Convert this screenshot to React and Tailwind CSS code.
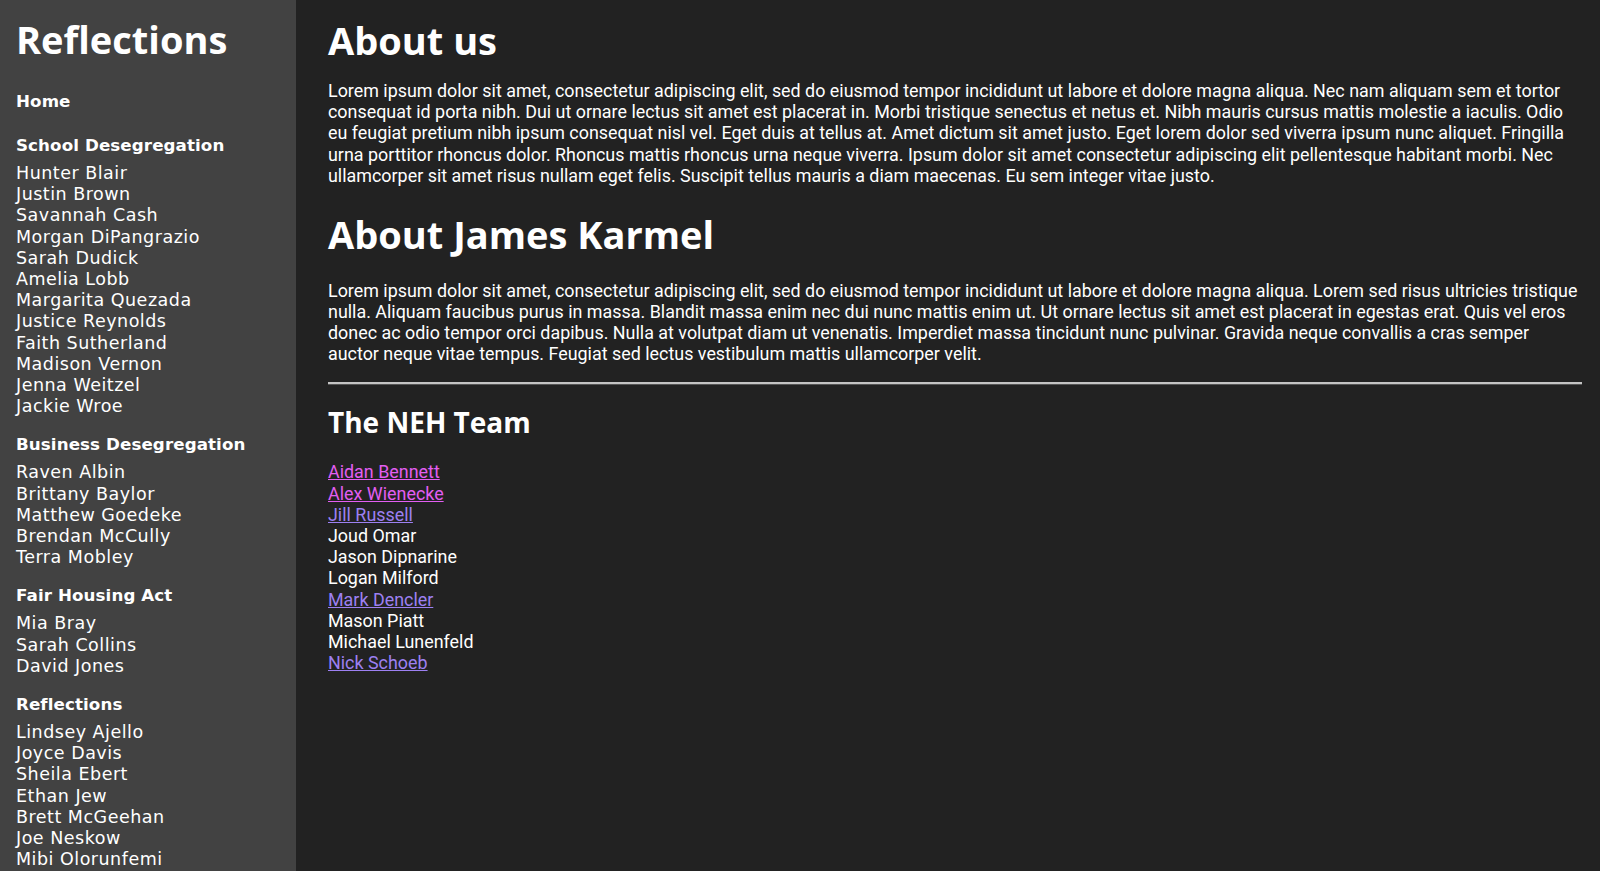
export default function App() {
  const sections = [
    {
      title: "School Desegregation",
      names: [
        "Hunter Blair",
        "Justin Brown",
        "Savannah Cash",
        "Morgan DiPangrazio",
        "Sarah Dudick",
        "Amelia Lobb",
        "Margarita Quezada",
        "Justice Reynolds",
        "Faith Sutherland",
        "Madison Vernon",
        "Jenna Weitzel",
        "Jackie Wroe",
      ],
    },
    {
      title: "Business Desegregation",
      names: ["Raven Albin", "Brittany Baylor", "Matthew Goedeke", "Brendan McCully", "Terra Mobley"],
    },
    { title: "Fair Housing Act", names: ["Mia Bray", "Sarah Collins", "David Jones"] },
    {
      title: "Reflections",
      names: [
        "Lindsey Ajello",
        "Joyce Davis",
        "Sheila Ebert",
        "Ethan Jew",
        "Brett McGeehan",
        "Joe Neskow",
        "Mibi Olorunfemi",
      ],
    },
  ];

  const team = [
    { name: "Aidan Bennett", c: "pink" },
    { name: "Alex Wienecke", c: "pink" },
    { name: "Jill Russell", c: "purple" },
    { name: "Joud Omar" },
    { name: "Jason Dipnarine" },
    { name: "Logan Milford" },
    { name: "Mark Dencler", c: "purple" },
    { name: "Mason Piatt" },
    { name: "Michael Lunenfeld" },
    { name: "Nick Schoeb", c: "purple" },
  ];

  return (
    <div className="flex h-[871px] w-[1600px] overflow-hidden bg-[#222222] text-white">
      <aside className="w-[296px] shrink-0 bg-[#424242] pl-4 overflow-hidden font-['DejaVu_Sans',sans-serif]">
        <h1 className="mt-[15px] text-[38px] leading-[48px] font-bold font-['Open_Sans',sans-serif]">Reflections</h1>
        <div className="mt-[28px] text-[16.7px] leading-[21px] font-bold tracking-[0.1px]">Home</div>
        {sections.map((s, i) => (
          <div key={s.title} className={i === 0 ? "mt-[23px]" : "mt-[17px]"}>
            <div className="text-[16.7px] leading-[21px] font-bold tracking-[0.1px] mb-[7px]">{s.title}</div>
            <ul>
              {s.names.map((n) => (
                <li key={n} className="text-[17.5px] leading-[21.2px] tracking-[0.5px]">
                  {n}
                </li>
              ))}
            </ul>
          </div>
        ))}
      </aside>
      <main className="flex-1 pl-8 pr-[18px] overflow-hidden font-['Roboto',sans-serif] text-[17.9px] leading-[21.2px]">
        <h1 className="mt-[18px] text-[38px] leading-[44px] font-bold font-['Open_Sans',sans-serif]">About us</h1>
        <p className="mt-[18px]">
          Lorem ipsum dolor sit amet, consectetur adipiscing elit, sed do eiusmod tempor incididunt ut labore et dolore
          magna aliqua. Nec nam aliquam sem et tortor consequat id porta nibh. Dui ut ornare lectus sit amet est placerat
          in. Morbi tristique senectus et netus et. Nibh mauris cursus mattis molestie a iaculis. Odio eu feugiat pretium
          nibh ipsum consequat nisl vel. Eget duis at tellus at. Amet dictum sit amet justo. Eget lorem dolor sed viverra
          ipsum nunc aliquet. Fringilla urna porttitor rhoncus dolor. Rhoncus mattis rhoncus urna neque viverra. Ipsum
          dolor sit amet consectetur adipiscing elit pellentesque habitant morbi. Nec ullamcorper sit amet risus nullam
          eget felis. Suscipit tellus mauris a diam maecenas. Eu sem integer vitae justo.
        </p>
        <h2 className="mt-[26px] text-[38px] leading-[44px] font-bold font-['Open_Sans',sans-serif]">
          About James Karmel
        </h2>
        <p className="mt-[23.5px]">
          Lorem ipsum dolor sit amet, consectetur adipiscing elit, sed do eiusmod tempor incididunt ut labore et dolore
          magna aliqua. Lorem sed risus ultricies tristique nulla. Aliquam faucibus purus in massa. Blandit massa enim nec
          dui nunc mattis enim ut. Ut ornare lectus sit amet est placerat in egestas erat. Quis vel eros donec ac odio
          tempor orci dapibus. Nulla at volutpat diam ut venenatis. Imperdiet massa tincidunt nunc pulvinar. Gravida neque
          convallis a cras semper auctor neque vitae tempus. Feugiat sed lectus vestibulum mattis ullamcorper velit.
        </p>
        <hr className="mt-[18px] h-0 border-0 border-t-2 border-b border-t-[#c4c4c4] border-b-[#555555]" />
        <h3 className="mt-[19px] text-[28px] leading-[36px] font-bold font-['Open_Sans',sans-serif]">The NEH Team</h3>
        <ul className="mt-[21px]">
          {team.map((t) => (
            <li key={t.name}>
              {t.c === "pink" ? (
                <a href="#" className="underline text-[#e35ef2]">
                  {t.name}
                </a>
              ) : t.c === "purple" ? (
                <a href="#" className="underline text-[#9d80f2]">
                  {t.name}
                </a>
              ) : (
                t.name
              )}
            </li>
          ))}
        </ul>
      </main>
    </div>
  );
}
